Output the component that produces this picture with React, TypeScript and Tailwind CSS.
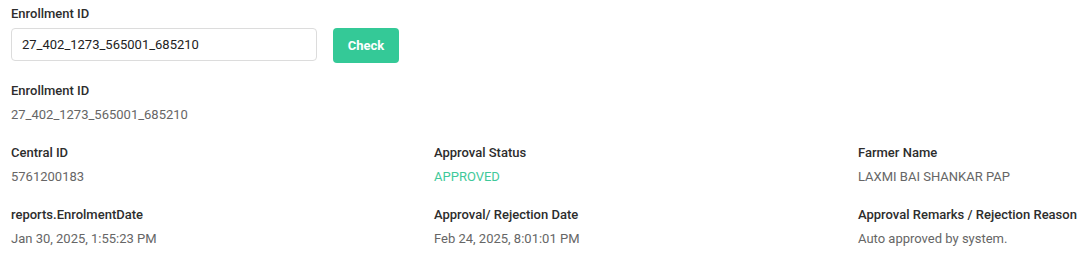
const rows = [
  [
    { label: "Central ID", value: "5761200183" },
    { label: "Approval Status", value: "APPROVED", green: true },
    { label: "Farmer Name", value: "LAXMI BAI SHANKAR PAP" },
  ],
  [
    { label: "reports.EnrolmentDate", value: "Jan 30, 2025, 1:55:23 PM" },
    { label: "Approval/ Rejection Date", value: "Feb 24, 2025, 8:01:01 PM" },
    { label: "Approval Remarks / Rejection Reason", value: "Auto approved by system." },
  ],
];

export default function App() {
  return (
    <div className="w-[1092px] h-[270px] bg-white px-[11px] pt-[6px] font-['Roboto',sans-serif] text-[13px]">
      {/* Search */}
      <p className="font-medium text-[#2d2d2d] leading-[16px]">Enrollment ID</p>
      <div className="flex items-start gap-4 mt-[6px]">
        <input
          defaultValue="27_402_1273_565001_685210"
          className="w-[306px] h-[33px] rounded-[4px] border border-[#dcdcdc] px-[10px] text-[13px] text-[#222] outline-none"
        />
        <button className="w-[66px] h-[35px] rounded-[4px] bg-[#34c997] text-white font-bold text-[13px]">
          Check
        </button>
      </div>

      {/* Details */}
      <div className="mt-[20px]">
        <p className="font-medium text-[#2d2d2d] leading-[16px]">Enrollment ID</p>
        <p className="mt-[8px] text-[#666] leading-[16px]">27_402_1273_565001_685210</p>
      </div>

      <div className="grid grid-cols-[423px_424px_1fr] mt-[22px] gap-y-[22px]">
        {rows.flat().map((f) => (
          <div key={f.label}>
            <p className="font-medium text-[#2d2d2d] leading-[16px] whitespace-nowrap">{f.label}</p>
            <p className={`mt-[8px] leading-[16px] ${f.green ? "text-[#3fc99a]" : "text-[#666]"}`}>{f.value}</p>
          </div>
        ))}
      </div>
    </div>
  );
}
